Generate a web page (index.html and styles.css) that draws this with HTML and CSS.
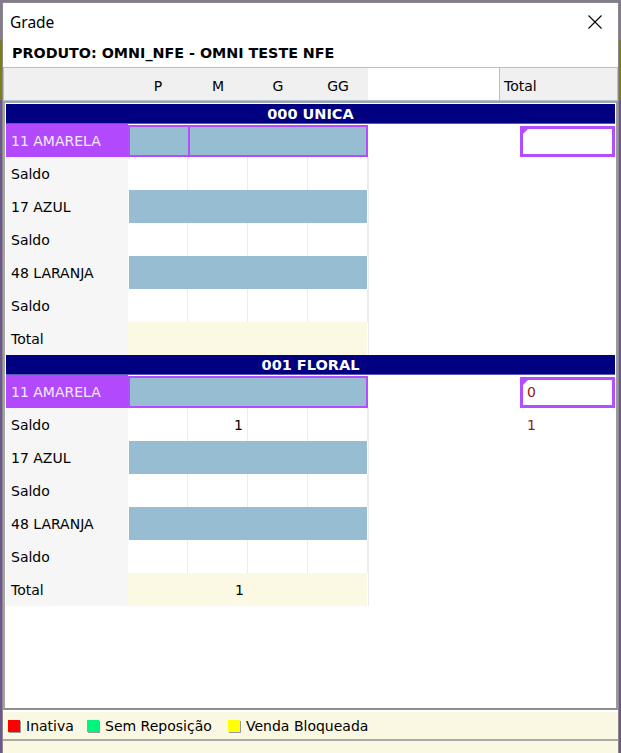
FILE: index.html
```html
<!DOCTYPE html>
<html lang="pt">
<head>
<meta charset="utf-8">
<title>Grade</title>
<link rel="stylesheet" href="styles.css">
</head>
<body>
<div class="window">
  <div class="titlebar">
    <span class="title">Grade</span>
    <svg class="close" width="14" height="14" viewBox="0 0 14 14"><path d="M0.5 0.5 L13.5 13.5 M13.5 0.5 L0.5 13.5" stroke="#000" stroke-width="1.1" fill="none"/></svg>
  </div>
  <div class="product">PRODUTO: OMNI_NFE - OMNI TESTE NFE</div>
  <div class="panel">
    <div class="header">
      <div class="h-lbl"></div>
      <div class="h-size">P</div>
      <div class="h-size">M</div>
      <div class="h-size">G</div>
      <div class="h-size">GG</div>
      <div class="h-gap"></div>
      <div class="h-total">Total</div>
    </div>
    <div class="data">
      <div class="block">
        <div class="band">000 UNICA</div>
        <div class="row">
          <div class="lbl sel">11 AMARELA</div>
          <div class="fill sel-fill"><div class="focus"></div></div>
          <div class="gap"></div>
          <div class="tot-box"><span class="corner"></span></div>
        </div>
        <div class="row">
          <div class="lbl">Saldo</div>
          <div class="c"></div><div class="c"></div><div class="c"></div><div class="c"></div>
          <div class="gap"></div><div class="tot"></div>
        </div>
        <div class="row">
          <div class="lbl">17 AZUL</div>
          <div class="fill"></div>
          <div class="gap"></div><div class="tot"></div>
        </div>
        <div class="row">
          <div class="lbl">Saldo</div>
          <div class="c"></div><div class="c"></div><div class="c"></div><div class="c"></div>
          <div class="gap"></div><div class="tot"></div>
        </div>
        <div class="row">
          <div class="lbl">48 LARANJA</div>
          <div class="fill"></div>
          <div class="gap"></div><div class="tot"></div>
        </div>
        <div class="row">
          <div class="lbl">Saldo</div>
          <div class="c"></div><div class="c"></div><div class="c"></div><div class="c"></div>
          <div class="gap"></div><div class="tot"></div>
        </div>
        <div class="row">
          <div class="lbl">Total</div>
          <div class="t"></div><div class="t"></div><div class="t"></div><div class="t"></div>
          <div class="gap"></div><div class="tot"></div>
        </div>
      </div>
      <div class="block">
        <div class="band">001 FLORAL</div>
        <div class="row">
          <div class="lbl sel">11 AMARELA</div>
          <div class="fill sel-fill"></div>
          <div class="gap"></div>
          <div class="tot-box"><span class="corner"></span>0</div>
        </div>
        <div class="row">
          <div class="lbl">Saldo</div>
          <div class="c"></div><div class="c num">1</div><div class="c"></div><div class="c"></div>
          <div class="gap"></div><div class="tot red">1</div>
        </div>
        <div class="row">
          <div class="lbl">17 AZUL</div>
          <div class="fill"></div>
          <div class="gap"></div><div class="tot"></div>
        </div>
        <div class="row">
          <div class="lbl">Saldo</div>
          <div class="c"></div><div class="c"></div><div class="c"></div><div class="c"></div>
          <div class="gap"></div><div class="tot"></div>
        </div>
        <div class="row">
          <div class="lbl">48 LARANJA</div>
          <div class="fill"></div>
          <div class="gap"></div><div class="tot"></div>
        </div>
        <div class="row">
          <div class="lbl">Saldo</div>
          <div class="c"></div><div class="c"></div><div class="c"></div><div class="c"></div>
          <div class="gap"></div><div class="tot"></div>
        </div>
        <div class="row">
          <div class="lbl">Total</div>
          <div class="t"></div><div class="t num">1</div><div class="t"></div><div class="t"></div>
          <div class="gap"></div><div class="tot"></div>
        </div>
      </div>
    </div>
  </div>
  <div class="status">
    <div class="legend-item w1"><span class="sq red-sq"></span>Inativa</div>
    <div class="legend-item w2"><span class="sq green-sq"></span>Sem Reposição</div>
    <div class="legend-item"><span class="sq yellow-sq"></span>Venda Bloqueada</div>
  </div>
  <div class="status-rest"></div>
</div>
</body>
</html>
```

FILE: styles.css
```css
html, body {
  margin: 0;
  padding: 0;
}
body {
  width: 621px;
  height: 753px;
  overflow: hidden;
  background: linear-gradient(to bottom, #857a8e 0, #857a8e 40px, #7e7e16 40px, #7e7e16 100px, #6e5590 100px);
  font-family: "DejaVu Sans", sans-serif;
  font-size: 14px;
  color: #000;
}
.window {
  box-sizing: border-box;
  width: 617px;
  height: 751px;
  margin: 2px 0 0 2px;
  border: 1px solid #8a8a8a;
  border-bottom: none;
  background: #fff;
  display: flex;
  flex-direction: column;
}
.titlebar {
  height: 37px;
  flex: none;
  display: flex;
  align-items: center;
  justify-content: space-between;
  padding: 0 16px 0 7px;
}
.title {
  font-family: "Noto Sans", sans-serif;
  font-size: 15.5px;
  color: #000;
}
.close {
  display: block;
}
.product {
  height: 26px;
  flex: none;
  line-height: 26px;
  padding-left: 9px;
  font-weight: bold;
  font-size: 14.3px;
}
.panel {
  margin-top: 1px;
  flex: none;
  height: 643px;
  display: flex;
  flex-direction: column;
}
.header {
  box-sizing: border-box;
  height: 34px;
  flex: none;
  display: flex;
  border: 1px solid #aec2d6;
  background: #fff;
}
.header > div {
  display: flex;
  align-items: center;
  padding-top: 3px;
  box-sizing: border-box;
}
.h-lbl {
  width: 124px;
  background: #f0f0f0;
}
.h-size {
  width: 60px;
  background: #f0f0f0;
  justify-content: center;
}
.h-gap {
  width: 131px;
  background: #fff;
}
.h-total {
  flex: 1;
  background: #f0f0f0;
  border-left: 1px solid #aec2d6;
  padding-left: 4px;
}
.data {
  flex: 1;
  box-sizing: border-box;
  border: 2px solid #a4a4a4;
  border-right-color: #9a9a9a;
  border-bottom-color: #8e8e8e;
  padding: 1px;
  background: #fff;
}
.band {
  height: 20px;
  box-sizing: border-box;
  line-height: 20px;
  background: #000080;
  border-bottom: 1px solid #5a5ab0;
  color: #fff;
  font-weight: bold;
  font-size: 14.5px;
  text-align: center;
}
.row {
  display: grid;
  grid-template-columns: 122px 60px 60px 60px 60px 1fr 95px;
  height: 33px;
}
.lbl {
  background: #f6f6f6;
  padding-left: 5px;
  display: flex;
  align-items: center;
}
.lbl.sel {
  background: #b349fd;
  color: #f4eaff;
}
.c {
  border-right: 1px solid #ececec;
  display: flex;
  align-items: center;
  justify-content: flex-end;
  padding-right: 4px;
}
.t {
  background: #fbf8e4;
  display: flex;
  align-items: center;
  justify-content: flex-end;
  padding-right: 4px;
}
.t:nth-child(5) {
  margin-right: 1px;
}
.fill {
  grid-column: 2 / 6;
  background: #97bdd3;
  margin: 0 1px 0 1px;
}
.sel-fill {
  box-sizing: border-box;
  margin: 1px 0 0 0;
  border: 2px solid #b44cff;
  display: flex;
}
.focus {
  width: 58px;
  border-right: 2px solid #b44cff;
}
.gap {
  border-left: 1px solid #ececec;
}
.sel-fill + .gap {
  border-left-color: #fff;
}
.tot {
  display: flex;
  align-items: center;
  padding-left: 7px;
}
.red {
  color: #8e1c1c;
}
.tot-box {
  position: relative;
  box-sizing: border-box;
  margin: 2px 0 0 0;
  border: 3px solid #b44cff;
  background: #fff;
  display: flex;
  align-items: center;
  padding-left: 4px;
  padding-bottom: 2px;
  color: #8e1c1c;
}
.corner {
  position: absolute;
  left: 0;
  top: 0;
  width: 0;
  height: 0;
  border-top: 5px solid #b44cff;
  border-right: 5px solid transparent;
}
.status {
  margin-top: 2px;
  height: 29px;
  flex: none;
  box-sizing: border-box;
  background: #faf7e3;
  border-bottom: 2px solid #a8a8a8;
  display: flex;
  align-items: center;
  padding-left: 5px;
  padding-top: 1px;
}
.legend-item {
  display: flex;
  align-items: center;
  white-space: nowrap;
}
.w1 { width: 79px; }
.w2 { width: 141px; }
.sq {
  width: 12px;
  height: 12px;
  margin-right: 6px;
  box-shadow: 1px 1px 0 #9a9a9a;
}
.red-sq { background: #ff0000; }
.green-sq { background: #00f57f; }
.yellow-sq { background: #ffff00; }
.status-rest {
  flex: 1;
  background: #faf7e3;
}
```
